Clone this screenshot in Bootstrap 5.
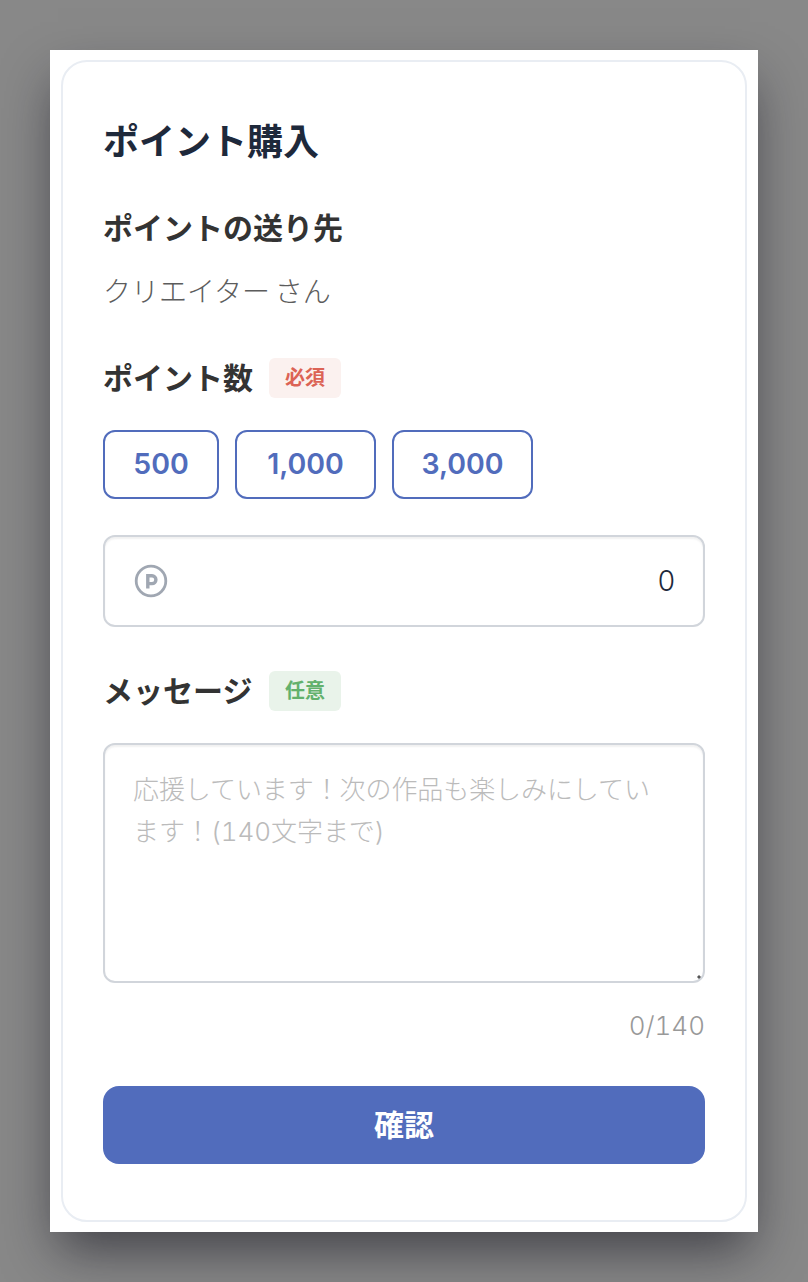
<!DOCTYPE html>
<html lang="ja">
<head>
<meta charset="utf-8">
<title>ポイント購入</title>
<link rel="stylesheet" href="https://cdn.jsdelivr.net/npm/bootstrap@5.3.0/dist/css/bootstrap.min.css">
<style>
html,body{height:100%;}
body{background:#888;font-family:Inter,"Noto Sans CJK JP",sans-serif;padding:50px;}
.sheet{width:708px;height:1182px;margin:0 auto;background:#fff;padding:10px 11px;box-shadow:0 25px 50px -8px rgba(20,20,30,.62);}
.pane{height:1162px;border:2px solid #e9edf3;border-radius:26px;padding:38px 40px 0;}
.pane-title{font-size:36px;font-weight:700;color:#1e293b;line-height:84px;margin:0;height:84px;}
.lbl{font-size:30px;font-weight:700;color:#333;line-height:44px;margin:0;}
.lbl-first{margin-top:22px;}
.lbl-w{width:150px;white-space:nowrap;}
.to-name{font-size:28px;font-weight:300;color:#5c5c5c;line-height:40px;margin-top:22px;word-spacing:-3px;}
.tag{font-size:20px;font-weight:700;width:72px;height:40px;border-radius:6px;line-height:40px;text-align:center;}
.tag-req{background:#fbf1ef;color:#dc6355;}
.tag-opt{background:#e9f3ea;color:#62b16c;}
.row-points{margin-top:44px;}
.row-amts{margin-top:30px;}
.amt{height:69px;border:2px solid #516cbc;border-radius:12px;color:#516cbc;background:#fff;font-size:28.5px;font-weight:600;padding:0;line-height:1;}
.amt:hover{color:#516cbc;border-color:#516cbc;background:#fff;}
.amt-a{width:116px;}.amt-b{width:141px;}
.pt-box{height:92px;margin-top:36px;border:2px solid #d1d5db;border-radius:12px;padding:0 28px 0 29px;box-shadow:inset 0 2px 2px rgba(0,0,0,.06);}
.pt-val{font-size:28px;font-weight:300;color:#1e293b;}
.row-msg{margin-top:42px;}
.msg{height:240px;margin-top:30px;border:2px solid #d1d5db;border-radius:12px;padding:24px 28px;font-size:26px;font-weight:300;line-height:42px;resize:vertical;box-shadow:inset 0 2px 2px rgba(0,0,0,.06);color:#333;font-variant-numeric:tabular-nums;letter-spacing:-.08px;}
.msg::placeholder{color:#bbb;opacity:1;}
.msg::-webkit-resizer{background:radial-gradient(circle at 11px 11px,#555 1.2px,transparent 2px);}
.counter{font-size:26px;font-weight:300;color:#999;line-height:40px;margin-top:23px;font-variant-numeric:tabular-nums;}
.go{height:78px;background:#516cbc;border:0;border-radius:16px;color:#fff;font-size:30px;font-weight:700;margin-top:40px;}
.go:hover{background:#516cbc;color:#fff;}
</style>
</head>
<body>
<div class="sheet">
<div class="pane d-flex flex-column">
  <h1 class="pane-title">ポイント購入</h1>
  <h2 class="lbl lbl-first">ポイントの送り先</h2>
  <div class="to-name">クリエイター さん</div>
  <div class="d-flex align-items-center gap-3 row-points"><h2 class="lbl lbl-w">ポイント数</h2><span class="tag tag-req">必須</span></div>
  <div class="d-flex gap-3 row-amts"><button class="btn amt amt-a" type="button">500</button><button class="btn amt amt-b" type="button">1,000</button><button class="btn amt amt-b" type="button">3,000</button></div>
  <div class="pt-box d-flex align-items-center justify-content-between">
    <svg width="34" height="34" viewBox="0 0 34 34" fill="none" aria-hidden="true"><circle cx="17" cy="17" r="14.8" stroke="#a0a7b2" stroke-width="2.8"/><path d="M13.8 24.5V11.8h4.2a3.9 3.9 0 0 1 0 7.8h-4.2" stroke="#a0a7b2" stroke-width="3.4"/></svg>
    <span class="pt-val">0</span>
  </div>
  <div class="d-flex align-items-center gap-3 row-msg"><h2 class="lbl lbl-w">メッセージ</h2><span class="tag tag-opt">任意</span></div>
  <textarea class="form-control msg" placeholder="応援しています！次の作品も楽しみにしています！(140文字まで)"></textarea>
  <div class="counter text-end">0/140</div>
  <button class="btn go w-100" type="button">確認</button>
</div>
</div>
<script src="https://cdn.jsdelivr.net/npm/bootstrap@5.3.0/dist/js/bootstrap.bundle.min.js"></script>
</body>
</html>
